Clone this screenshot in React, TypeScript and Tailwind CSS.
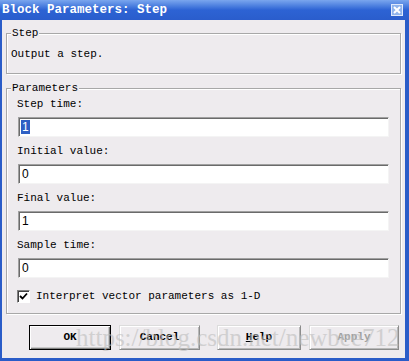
import React from "react";

const mono = { fontFamily: '"Liberation Mono", "DejaVu Sans Mono", monospace' };

function Field({ label, value, selected }: { label: string; value: string; selected?: boolean }) {
  return (
    <div className="flex flex-col">
      <div className="h-[14px] leading-[14px] text-[11px] text-black pl-[6px]" style={mono}>
        {label}
      </div>
      <div className="mt-[6px] ml-[7px] mr-[11px] h-[20px] bg-white border-t border-l border-t-[#a0a0a0] border-l-[#a0a0a0] border-b border-r border-b-[#f4f4f4] border-r-[#f4f4f4] shadow-[inset_1px_1px_0_#6a6a6a] flex items-center pl-[2px]">
        <span
          className={
            "text-[12px] leading-[14px] px-[1px] " + (selected ? "bg-[#2f5fc4] text-white" : "text-black")
          }
          style={{ fontFamily: '"Liberation Sans", Arial, sans-serif' }}
        >
          {value}
        </span>
      </div>
    </div>
  );
}

function Btn({ children, def, disabled, w }: { children: React.ReactNode; def?: boolean; disabled?: boolean; w: string }) {
  return (
    <div
      className={
        "h-[25px] flex items-center justify-center text-[11px] font-bold " +
        w +
        " " +
        (def
          ? "border border-black shadow-[inset_1px_1px_0_#ffffff,inset_-1px_-1px_0_#808080,inset_-2px_-2px_0_#c8c8c8]"
          : "border border-t-[#dcdcdc] border-l-[#dcdcdc] border-b-[#8c8c8c] border-r-[#8c8c8c] shadow-[inset_1px_1px_0_#ffffff,inset_-1px_-1px_0_#b8b8b8]") +
        (disabled ? " text-[#a0a0a0]" : " text-black")
      }
      style={mono}
    >
      {children}
    </div>
  );
}

export default function App() {
  return (
    <div className="w-[409px] h-[361px] bg-[#2a5cc8] relative overflow-hidden">
      {/* title bar */}
      <div className="h-[20px] bg-gradient-to-b from-[#7aa6ee] via-[#2d63d4] to-[#2a5dcc] flex items-center justify-between pl-[2px] pr-[6px]">
        <span className="text-white font-bold text-[12.5px] leading-[16px]" style={{ ...mono, fontFamily: '"Liberation Mono", "DejaVu Sans Mono", monospace' }}>
          Block Parameters: Step
        </span>
        <div className="w-[12px] h-[12px] bg-[#8fb3ec] border border-[#dfe9fb] flex items-center justify-center">
          <svg width="8" height="8" viewBox="0 0 8 8">
            <path d="M1 1 L7 7 M7 1 L1 7" stroke="white" strokeWidth="2" />
          </svg>
        </div>
      </div>
      {/* body */}
      <div className="absolute left-[2px] top-[20px] w-[403px] h-[338px] bg-[#eeebee] flex flex-col px-[4px]">
        {/* Step group */}
        <div className="relative mt-[13px] h-[41px] border border-[#a8a8a8] shadow-[inset_1px_1px_0_#ffffff,1px_1px_0_#ffffff] w-[395px]">
          <span className="absolute left-[4px] top-[-8px] px-[1px] bg-[#eeebee] text-[11px] leading-[14px] text-black" style={mono}>
            Step
          </span>
          <div className="pt-[13px] pl-[4px] text-[11px] leading-[14px] text-black" style={mono}>
            Output a step.
          </div>
        </div>
        {/* Parameters group */}
        <div className="relative mt-[14px] h-[226px] border border-[#a8a8a8] shadow-[inset_1px_1px_0_#ffffff,1px_1px_0_#ffffff] w-[395px] flex flex-col">
          <span className="absolute left-[4px] top-[-8px] px-[1px] bg-[#eeebee] text-[11px] leading-[14px] text-black" style={mono}>
            Parameters
          </span>
          <div className="flex flex-col gap-[7px] pt-[8px] pl-[4px]">
            <Field label="Step time:" value="1" selected />
            <Field label="Initial value:" value="0" />
            <Field label="Final value:" value="1" />
            <Field label="Sample time:" value="0" />
          </div>
          <div className="flex items-center mt-[11px] pl-[10px] gap-[6px]">
            <div className="w-[13px] h-[13px] bg-white border border-t-[#808080] border-l-[#808080] border-b-[#ffffff] border-r-[#ffffff] shadow-[inset_1px_1px_0_#404040] flex items-center justify-center">
              <svg width="9" height="9" viewBox="0 0 9 9">
                <path d="M1 4 L3.5 6.5 L8 1.5" stroke="black" strokeWidth="1.8" fill="none" />
              </svg>
            </div>
            <span className="text-[11px] leading-[14px] text-black" style={mono}>
              Interpret vector parameters as 1-D
            </span>
          </div>
        </div>
        {/* buttons */}
        <div className="flex mt-[11px] pl-[23px] gap-[8px]">
          <Btn def w="w-[82px]">OK</Btn>
          <Btn w="w-[81px]">Cancel</Btn>
          <div className="w-[1px]" />
          <Btn w="w-[84px]">
            <span className="underline">H</span>elp
          </Btn>
          <Btn disabled w="w-[90px]">Apply</Btn>
        </div>
      </div>
      {/* watermark */}
      <div
        className="absolute left-[76px] top-[324px] text-[25px] leading-[28px] text-[#bdbdbd] opacity-60 whitespace-nowrap pointer-events-none"
        style={{ fontFamily: '"Liberation Serif", "Times New Roman", serif' }}
      >
        https://blog.csdn.net/newbee712
      </div>
    </div>
  );
}
